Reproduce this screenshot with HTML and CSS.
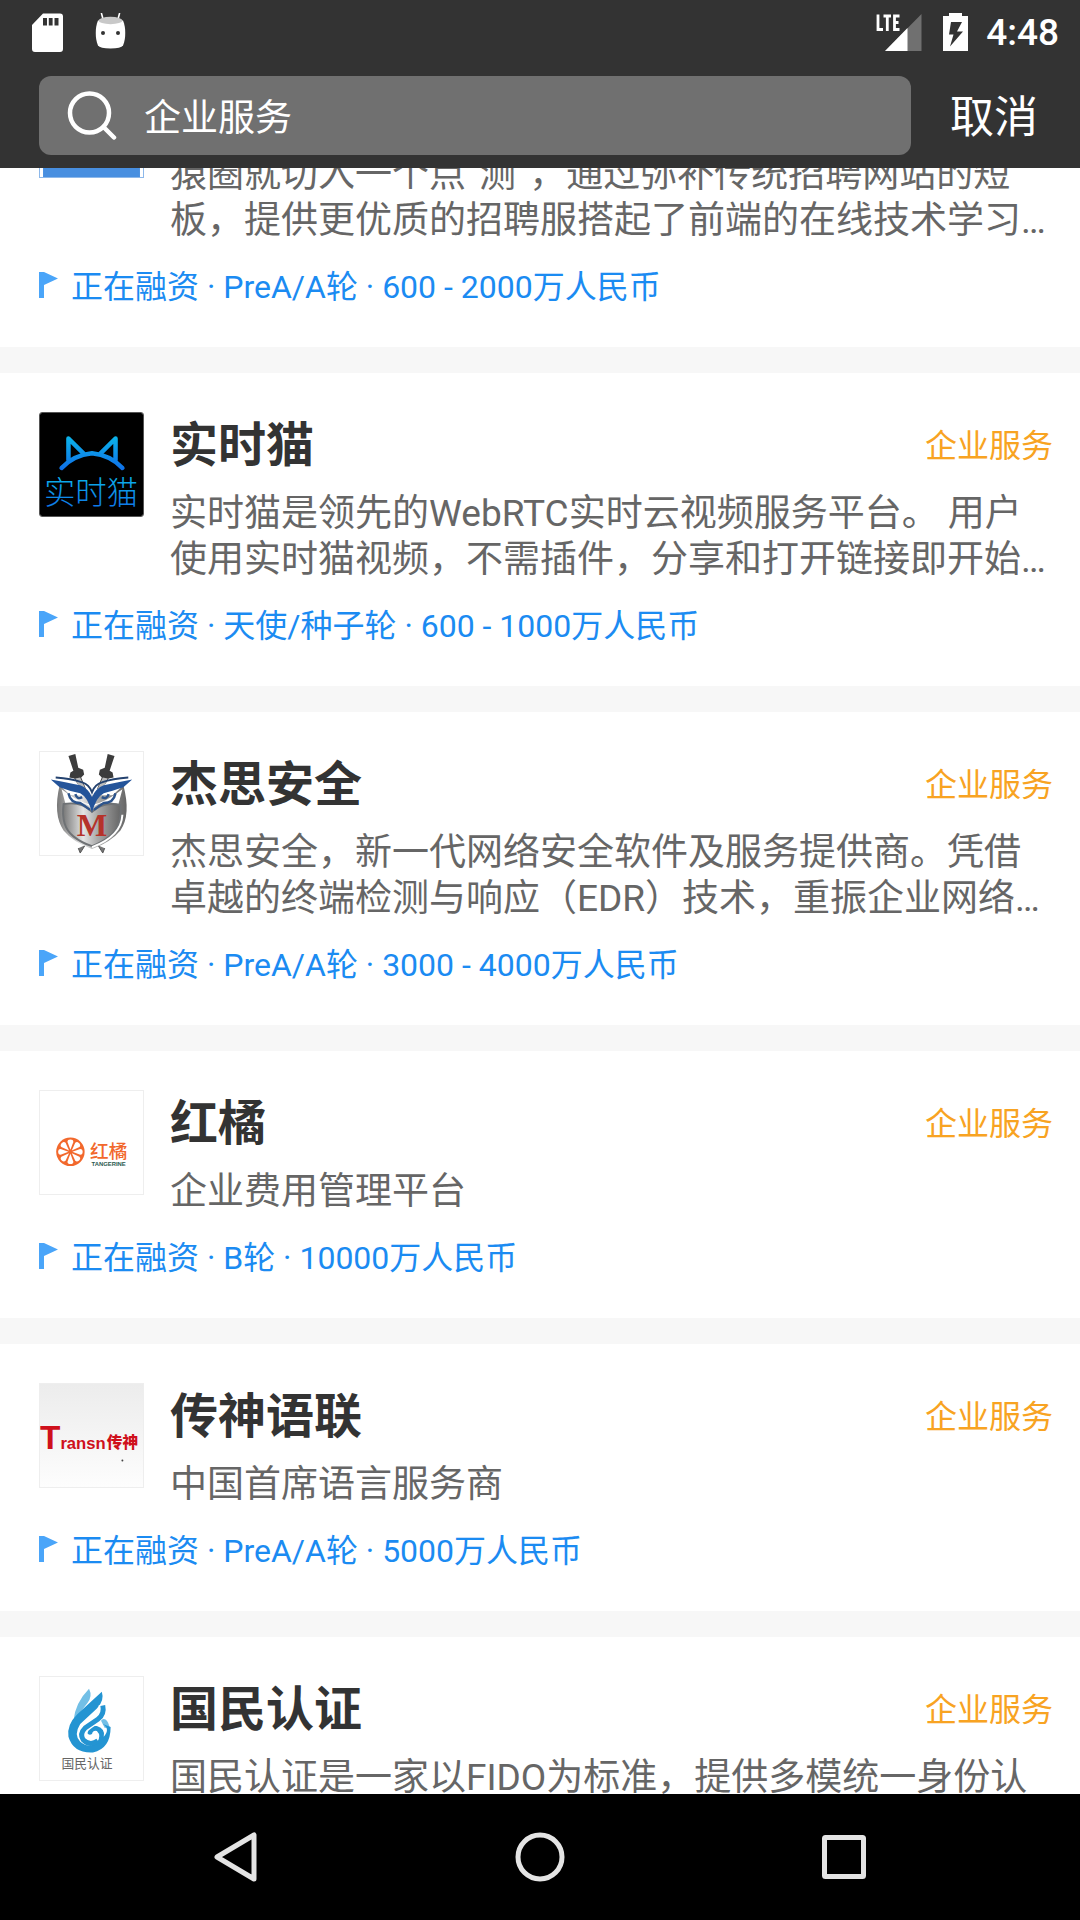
FILE: index.html
```html
<!DOCTYPE html>
<html lang="zh-CN">
<head>
<meta charset="utf-8">
<meta name="viewport" content="width=device-width, initial-scale=1">
<title>企业服务</title>
<link rel="stylesheet" href="styles.css">
</head>
<body>
<svg width="0" height="0" class="defs" aria-hidden="true">
  <symbol id="flag" viewBox="0 0 19 26"><path d="M0 0H5L19 6.500L5 13V26H0Z" fill="#4aa5f9"/></symbol>
</svg>
<header class="top">
  <div class="status">
    <svg class="status-sd" width="32" height="40" viewBox="0 0 32 40"><path fill="#fff" fill-rule="evenodd" d="M11 0.500H28Q31 0.500 31 3.500V36Q31 39 28 39H3Q0 39 0 36V12ZM11 5V12.500H15V5ZM16.800 5V12.500H20.600V5ZM22.500 5V12.500H26.500V5Z"/></svg>
    <svg class="status-bot" width="32" height="40" viewBox="0 0 32 40"><path d="M6.500 0.500L8.500 8M24.500 0.500L22.500 8" stroke="#fff" stroke-width="1.600" stroke-linecap="round"/><path d="M3 7.500C0 14 0 26 3 32.500Q5 35.500 15.500 35.500T28 32.500C31 26 31 14 28 7.500Z" fill="#fff"/><ellipse cx="15.500" cy="7.500" rx="12" ry="3.700" fill="#c8c8c8"/><circle cx="8" cy="20" r="2" fill="#333"/><circle cx="23" cy="20" r="2" fill="#333"/></svg>
    <svg class="status-signal" width="46" height="40" viewBox="0 0 46 40"><path d="M45.500 1V38H9Z" fill="#707070"/><path d="M31.500 15V38H9Z" fill="#fff"/><path d="M2 1.500V16.500H7M7.500 3H15M11.300 3V18M23.500 3H18.500V16.500H23.500M18.500 9.500H22.500" fill="none" stroke="#fff" stroke-width="2.800"/></svg>
    <svg class="status-battery" width="25" height="40" viewBox="0 0 25 40"><path fill="#fff" d="M6 0H19V3H25V38H0V3H6Z"/><path fill="#333" d="M8 9H19L14 18.500H20L7 33.500L10.500 21.500H6Z"/></svg>
    <span class="clock">4:48</span>
  </div>
  <form class="search">
    <label class="search-box">
      <svg width="50" height="50" viewBox="0 0 50 50" fill="none" stroke="#fff" stroke-width="4.500" stroke-linecap="round"><circle cx="22.500" cy="22" r="19.500"/><path d="M36.500 36L47 46.500"/></svg>
      <input type="text" value="企业服务" aria-label="搜索">
    </label>
    <button class="cancel" type="button">取消</button>
  </form>
</header>

<main class="viewport">
  <div class="list">
    <article class="card card-partial">
      <div class="card-main">
        <svg class="logo" viewBox="0 0 105 26"><rect width="105" height="26" fill="#488fe0"/></svg>
        <div class="info">
          <p class="desc">猿圈就切入一个点“测”，通过弥补传统招聘网站的短板，提供更优质的招聘服搭起了前端的在线技术学习…</p>
        </div>
      </div>
      <p class="funding"><svg width="19" height="26"><use href="#flag"/></svg>正在融资 · PreA/A轮 · 600 - 2000万人民币</p>
    </article>

    <article class="card">
      <div class="card-main">
        <svg class="logo logo-dark" viewBox="0 0 105 105">
          <defs><linearGradient id="cat" gradientUnits="userSpaceOnUse" x1="0" y1="24" x2="0" y2="58"><stop offset="0" stop-color="#0bb4ea"/><stop offset="1" stop-color="#0f6fe8"/></linearGradient><linearGradient id="cat-name" x1="0" y1="0" x2="0" y2="1"><stop offset="0" stop-color="#0bb4ea"/><stop offset="1" stop-color="#0f6fe8"/></linearGradient></defs>
          <rect width="105" height="105" fill="#000"/>
          <path d="M22 56Q34 43 53 41Q72 43 84 56M29 48V26L45 42M77 48V26L61 42" fill="none" stroke="url(#cat)" stroke-width="4.600" stroke-linecap="round" stroke-linejoin="round"/>
          <text class="cat-text" x="52" y="93" text-anchor="middle" fill="url(#cat-name)">实时猫</text>
        </svg>
        <div class="info">
          <div class="head"><h2>实时猫</h2><span class="tag">企业服务</span></div>
          <p class="desc">实时猫是领先的WebRTC实时云视频服务平台。 用户使用实时猫视频，不需插件，分享和打开链接即开始…</p>
        </div>
      </div>
      <p class="funding"><svg width="19" height="26"><use href="#flag"/></svg>正在融资 · 天使/种子轮 · 600 - 1000万人民币</p>
    </article>

    <article class="card">
      <div class="card-main">
        <svg class="logo" viewBox="0 0 105 105">
          <defs><linearGradient id="steel"><stop offset="0" stop-color="#777"/><stop offset=".35" stop-color="#e4e4e4"/><stop offset=".6" stop-color="#a9a9a9"/><stop offset="1" stop-color="#666"/></linearGradient></defs>
          <path d="M29 4L36 2L39 16L44 18L45 23L42 26L47 38L38 32L35 27L30 26L31 21L34 19ZM76 4L69 2L66 16L61 18L60 23L63 26L58 38L67 32L70 27L75 26L74 21L71 19Z" fill="#3c3c3c"/>
          <path d="M36 27L41 26L46 37L40 36ZM69 27L64 26L59 37L65 36Z" fill="#bbb"/>
          <path d="M39 98L41 103L46 95M66 98L64 103L59 95" fill="#777" stroke="#555"/>
          <path d="M20 34Q13 64 24 80Q34 92 53 99Q72 92 82 80Q93 64 85 34L74 44H31Z" fill="url(#steel)"/>
          <path d="M22 38Q40 52 53 54Q66 52 84 38L80 53Q61 48 53 58Q45 48 26 53Z" fill="#fff"/>
          <path d="M24 53Q42 50 53 61Q64 50 82 54Q84 76 71 86Q62 93 53 96Q43 93 34 86Q21 76 24 53Z" fill="url(#steel)" stroke="#6f7275" stroke-width="2"/>
          <path d="M29 42Q31 52 41 52Q46 55 51 59M77 42Q75 52 65 52Q60 55 55 59M36 43Q38 49 43 46M70 43Q68 49 63 46" fill="none" stroke="#2d548c" stroke-width="2.500"/>
          <path d="M11 28Q28 31 41 34Q49 37 53 46Q57 37 65 34Q78 31 94 28L85 36Q73 40 65 42Q57 46 53 62Q49 46 41 42Q30 40 20 36Z" fill="#24549a"/>
          <path d="M16 26Q32 27 43 31Q50 33 53 41Q56 33 63 31Q74 27 90 26" fill="none" stroke="#24426f" stroke-width="2"/>
          <text class="shield-text" x="53" y="86" text-anchor="middle">M</text>
          <path d="M84 64Q83 86 53 97" fill="none" stroke="#fff" stroke-width="2"/>
        </svg>
        <div class="info">
          <div class="head"><h2>杰思安全</h2><span class="tag">企业服务</span></div>
          <p class="desc">杰思安全，新一代网络安全软件及服务提供商。凭借卓越的终端检测与响应（EDR）技术，重振企业网络…</p>
        </div>
      </div>
      <p class="funding"><svg width="19" height="26"><use href="#flag"/></svg>正在融资 · PreA/A轮 · 3000 - 4000万人民币</p>
    </article>

    <article class="card">
      <div class="card-main">
        <svg class="logo" viewBox="0 0 105 105">
          <circle cx="31" cy="62" r="14.500" fill="#f2682c"/>
          <g fill="#fff">
            <path id="seg" d="M31 60L28 52Q28 49.500 31 49.500T34 52Z"/>
            <use href="#seg" transform="rotate(45 31 62)"/>
            <use href="#seg" transform="rotate(90 31 62)"/>
            <use href="#seg" transform="rotate(135 31 62)"/>
            <use href="#seg" transform="rotate(180 31 62)"/>
            <use href="#seg" transform="rotate(225 31 62)"/>
            <use href="#seg" transform="rotate(270 31 62)"/>
            <use href="#seg" transform="rotate(315 31 62)"/>
          </g>
          <text class="tangerine-cn" x="70" y="68" text-anchor="middle">红橘</text>
          <text class="tangerine-en" x="70" y="76" text-anchor="middle">TANGERINE</text>
        </svg>
        <div class="info">
          <div class="head"><h2>红橘</h2><span class="tag">企业服务</span></div>
          <p class="desc">企业费用管理平台</p>
        </div>
      </div>
      <p class="funding"><svg width="19" height="26"><use href="#flag"/></svg>正在融资 · B轮 · 10000万人民币</p>
    </article>

    <article class="card">
      <div class="card-main">
        <svg class="logo" viewBox="0 0 105 105">
          <defs><linearGradient id="paper" x1="0" y1="0" x2="0" y2="1"><stop offset="0" stop-color="#ececec"/><stop offset="1" stop-color="#fdfdfd"/></linearGradient></defs>
          <rect width="105" height="105" fill="url(#paper)"/>
          <text class="transn-en" x="0" y="66"><tspan class="transn-t">T</tspan>ransn</text>
          <text class="transn-cn" x="68" y="65">传神</text>
          <circle cx="84" cy="78" r="1" fill="#444"/>
        </svg>
        <div class="info">
          <div class="head"><h2>传神语联</h2><span class="tag">企业服务</span></div>
          <p class="desc">中国首席语言服务商</p>
        </div>
      </div>
      <p class="funding"><svg width="19" height="26"><use href="#flag"/></svg>正在融资 · PreA/A轮 · 5000万人民币</p>
    </article>

    <article class="card">
      <div class="card-main">
        <svg class="logo" viewBox="0 0 105 105">
          <path d="M34 45Q36 26 50 12Q54 20 48 27Z" fill="#72bfe6"/>
          <path d="M62 44Q68 40 71 51L66 52Z" fill="#72bfe6"/>
          <path d="M63 15Q66 24 58 32L41 48Q34 59 41 66Q49 73 58 67Q63 60 58 55Q54 54 53 58Q50 60 48 57Q50 49 58 50Q67 53 65 61Q72 53 64 48L72 51Q72 73 54 77Q34 78 29 61Q27 49 38 38Z" fill="#2494d2"/>
          <path d="M63 28Q66 37 59 43L47 52Q43 57 46 62" fill="none" stroke="#fff" stroke-width="7"/>
          <path d="M64 29Q66 38 59 43L46 52Q40 58 44 64Q51 71 59 65" fill="none" stroke="#2494d2" stroke-width="5"/>
          <text class="guomin-text" x="48" y="93" text-anchor="middle">国民认证</text>
        </svg>
        <div class="info">
          <div class="head"><h2>国民认证</h2><span class="tag">企业服务</span></div>
          <p class="desc">国民认证是一家以FIDO为标准，提供多模统一身份认</p>
        </div>
      </div>
    </article>
  </div>
</main>

<nav class="nav">
  <button type="button" aria-label="返回"><svg width="50" height="54" viewBox="0 0 50 54"><path d="M6 27L43 5V49Z"/></svg></button>
  <button type="button" aria-label="主页"><svg width="54" height="54" viewBox="0 0 54 54"><circle cx="27" cy="27" r="22"/></svg></button>
  <button type="button" aria-label="最近"><svg width="50" height="54" viewBox="0 0 50 54"><rect x="5.500" y="7.500" width="39" height="39" rx="1"/></svg></button>
</nav>
</body>
</html>
```
FILE: styles.css
```css
* { box-sizing: border-box; }

body {
  margin: 0;
  height: 100vh;
  display: flex;
  flex-direction: column;
  background: #fff;
  color: #333;
  font-family: Roboto, "Noto Sans CJK SC", sans-serif;
}

h2, p { margin: 0; }
svg { display: block; flex: none; }
.defs { position: absolute; }

button, input {
  font-family: inherit;
  color: #fff;
  border: 0;
  padding: 0;
  background: none;
}

/* Status bar and search */
.top { flex: none; background: #333; color: #fff; }

.status {
  height: 63px;
  display: flex;
  align-items: center;
  padding: 2px 21px 0 32px;
}
.status-bot { margin-left: 31px; }
.status-signal { margin-left: auto; }
.status-battery { margin: 0 18px 0 21px; }
.clock { font-size: 37px; line-height: 40px; font-weight: 500; }

.search {
  display: flex;
  align-items: center;
  gap: 39px;
  padding: 13px 42px 13px 39px;
}
.search-box {
  flex: 1;
  height: 79px;
  display: flex;
  align-items: center;
  gap: 27px;
  padding: 0 28px;
  border-radius: 12px;
  background: #707070;
}
.search-box input {
  flex: 1;
  min-width: 0;
  height: 56px;
  padding-bottom: 2px;
  font-size: 37px;
  outline: 0;
}
.cancel { padding-top: 4px; font-size: 44px; line-height: 64px; }

/* Results; the first card is scrolled partly under the header */
.viewport { flex: 1; min-height: 0; overflow: hidden; }
.list {
  margin-top: -16px;
  display: flex;
  flex-direction: column;
  gap: 26px;
  background: #f7f7f7;
}
.card { padding: 39px 27px 40px 39px; background: #fff; }
.card-main { display: flex; align-items: flex-start; gap: 26px; }
.logo { width: 105px; height: 105px; border: 1px solid #eee; }
.logo-dark { border-color: #555; border-radius: 3px; }
.info { flex: 1; min-width: 0; }
.head { display: flex; align-items: center; justify-content: space-between; }
.head h2 { font-size: 48px; line-height: 68px; font-weight: 700; }
.tag { font-size: 32px; line-height: 40px; color: #f8a322; }
.desc { font-size: 37px; line-height: 46px; color: #666; }
.head + .desc { margin-top: 11px; }
.card-partial { padding-top: 0; }
.card-partial .logo { height: 26px; border-color: #8db8ea; }
.funding {
  margin-top: 23px;
  display: flex;
  align-items: flex-start;
  gap: 13px;
  font-size: 32px;
  line-height: 40px;
  color: #1b8bf2;
}
.funding svg { margin-top: 5px; }

/* Logo lettering */
.cat-text { font-size: 32px; font-weight: 300; }
.shield-text { font: 700 33px "Liberation Serif", serif; fill: #b5322a; }
.tangerine-cn { font-size: 19px; font-weight: 500; fill: #f2682c; }
.tangerine-en { font: 700 6px "Liberation Sans", sans-serif; fill: #2c5a50; }
.transn-en { font: 700 17px "Liberation Sans", sans-serif; fill: #cf101c; }
.transn-t { font-size: 34px; }
.transn-cn { font-size: 16px; font-weight: 900; fill: #cf101c; }
.guomin-text { font-size: 13px; fill: #666; }

/* System navigation */
.nav {
  flex: none;
  height: 126px;
  display: flex;
  justify-content: center;
  background: #000;
}
.nav button { width: 304px; display: flex; align-items: center; justify-content: center; }
.nav svg { fill: none; stroke: #e4e4e4; stroke-width: 5; stroke-linejoin: round; }
```
